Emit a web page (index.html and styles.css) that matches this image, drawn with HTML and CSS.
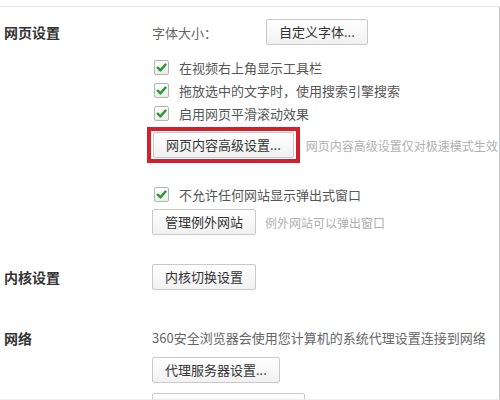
FILE: index.html
```html
<!DOCTYPE html>
<html lang="zh-CN">
<head>
    <meta charset="UTF-8">
    <meta name="viewport" content="width=device-width, initial-scale=1.0">
    <title>设置</title>
    <link rel="stylesheet" href="styles.css">
</head>
<body>

    <div class="settings">
        <div class="section first">
            <div class="label">网页设置</div>
            <div class="content">
                <div class="row font-row">
                    <span class="text">字体大小：</span>
                    <button class="btn">自定义字体...</button>
                </div>
                <div class="checks">
                    <label class="check"><span class="box"><svg viewBox="0 0 10 10"><path d="M1.6 5.2 L4 7.6 L8.6 2.4"/></svg></span>在视频右上角显示工具栏</label>
                    <label class="check"><span class="box"><svg viewBox="0 0 10 10"><path d="M1.6 5.2 L4 7.6 L8.6 2.4"/></svg></span>拖放选中的文字时，使用搜索引擎搜索</label>
                    <label class="check"><span class="box"><svg viewBox="0 0 10 10"><path d="M1.6 5.2 L4 7.6 L8.6 2.4"/></svg></span>启用网页平滑滚动效果</label>
                </div>
                <div class="row advanced-row">
                    <span class="highlight"><button class="btn">网页内容高级设置...</button></span>
                    <span class="hint">网页内容高级设置仅对极速模式生效</span>
                </div>
                <label class="check popup-check"><span class="box"><svg viewBox="0 0 10 10"><path d="M1.6 5.2 L4 7.6 L8.6 2.4"/></svg></span>不允许任何网站显示弹出式窗口</label>
                <div class="row except-row">
                    <button class="btn">管理例外网站</button>
                    <span class="hint">例外网站可以弹出窗口</span>
                </div>
            </div>
        </div>

        <div class="section kernel">
            <div class="label">内核设置</div>
            <div class="content">
                <button class="btn">内核切换设置</button>
            </div>
        </div>

        <div class="section network">
            <div class="label">网络</div>
            <div class="content">
                <div class="text">360安全浏览器会使用您计算机的系统代理设置连接到网络</div>
                <button class="btn proxy-btn">代理服务器设置...</button>
                <button class="btn next-btn"></button>
            </div>
        </div>
    </div>

</body>
</html>
```

FILE: styles.css
```css
* {
    margin: 0;
    padding: 0;
    box-sizing: border-box;
}
body {
    width: 500px;
    height: 400px;
    overflow: hidden;
    background: #fff;
    font-family: "Noto Sans CJK SC", "Noto Sans", sans-serif;
    font-size: 13px;
    color: #555;
}
.settings {
    margin-top: 6px;
    width: 500px;
    height: 394px;
    border-top: 1px solid #e4e4e4;
    border-right: 1px solid #c8c8c8;
    border-bottom: 1px solid #ececec;
    overflow: hidden;
}
.section {
    display: grid;
    grid-template-columns: 152px 1fr;
}
.label {
    padding-left: 4px;
    font-size: 14px;
    font-weight: bold;
    color: #333;
    line-height: 26px;
}
.first {
    padding-top: 12px;
}
.row {
    display: flex;
    align-items: center;
}
.text {
    color: #666;
}
.font-row .text {
    width: 114px;
}
.btn {
    height: 26px;
    padding: 0 12px;
    font-family: inherit;
    font-size: 13px;
    color: #333;
    white-space: nowrap;
    background: linear-gradient(#ffffff, #f1f1f1);
    border: 1px solid #c9c9c9;
    border-radius: 2px;
    line-height: 24px;
}
.checks {
    margin-top: 11px;
}
.check {
    display: flex;
    align-items: center;
    height: 23px;
    padding-left: 2px;
    color: #555;
}
.box {
    width: 15px;
    height: 15px;
    margin-right: 10px;
    border: 1px solid #b4b4b4;
    border-radius: 2px;
    background: linear-gradient(#ffffff, #ececec);
    display: flex;
    align-items: center;
    justify-content: center;
}
.box svg {
    width: 11px;
    height: 11px;
    fill: none;
    stroke: #2f9a35;
    stroke-width: 2.2;
    stroke-linecap: round;
    stroke-linejoin: round;
}
.advanced-row {
    margin-top: 2px;
}
.highlight {
    display: flex;
    margin-left: -5px;
    padding: 1px 2px;
    border: 4px solid #d3202c;
}
.hint {
    font-size: 12px;
    color: #b0b0b0;
    white-space: nowrap;
}
.advanced-row .hint {
    margin-left: 6px;
}
.popup-check {
    margin-top: 20px;
}
.except-row {
    margin-top: 3px;
}
.except-row .hint {
    margin-left: 9px;
}
.kernel {
    margin-top: 29px;
}
.kernel .label {
    line-height: 27px;
}
.network {
    margin-top: 37px;
}
.network .label,
.network .text {
    line-height: 20px;
}
.network .content {
    display: flex;
    flex-direction: column;
    align-items: flex-start;
}
.proxy-btn {
    margin-top: 9px;
}
.next-btn {
    margin-top: 10px;
    width: 153px;
}
```
